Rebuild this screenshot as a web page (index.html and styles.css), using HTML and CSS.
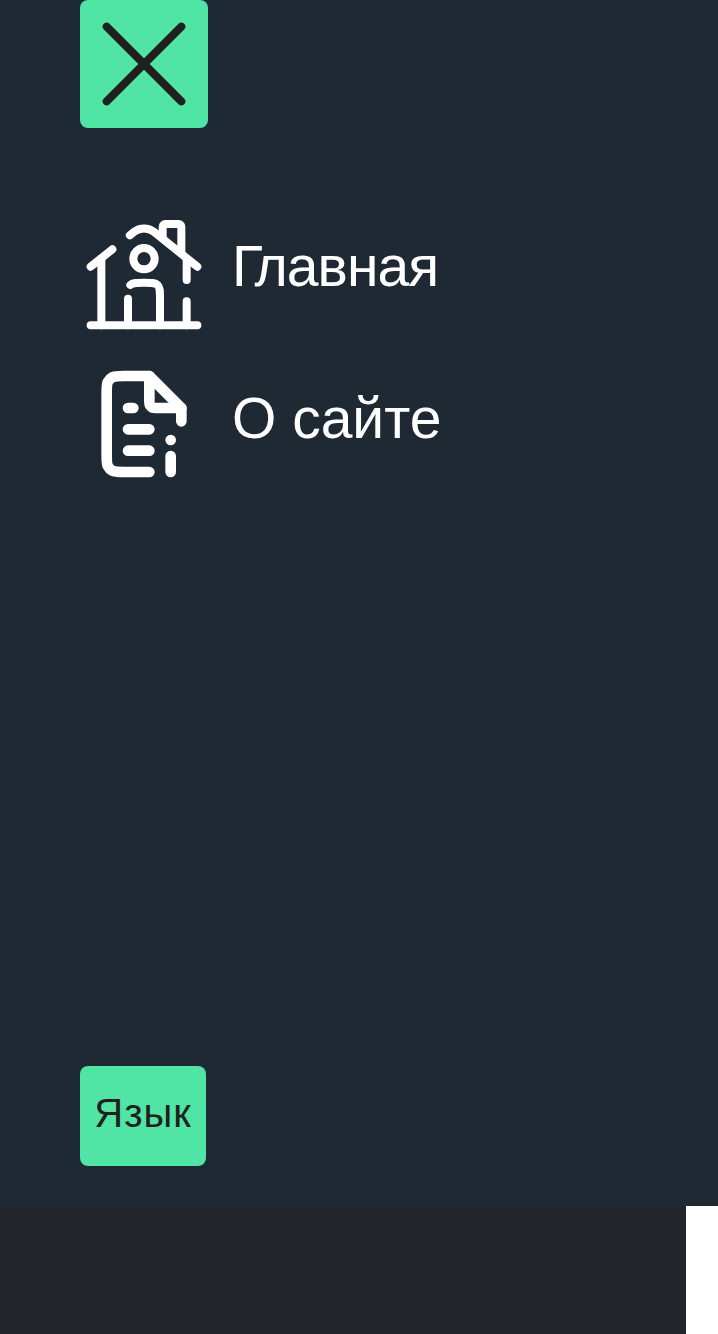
FILE: index.html
```html
<!DOCTYPE html>
<html lang="ru">
<head>
<meta charset="utf-8">
<title>Меню</title>
<link rel="stylesheet" href="styles.css">
</head>
<body>
<aside class="menu">
  <button class="close" aria-label="Закрыть">
    <svg class="icon" viewBox="0 0 24 24" stroke-width="1.5"><path d="M5 5L19 19M19 5L5 19"/></svg>
  </button>
  <nav class="links">
    <a class="link">
      <svg class="icon" viewBox="0 0 24 24" stroke-width="1.5">
        <path d="M22 22L2 22"/>
        <path d="M2 11L6.063 7.75M22 11L13.874 4.499C12.778 3.623 11.222 3.623 10.126 4.499L9.344 5.125"/>
        <path d="M15.5 5.5V3.5C15.5 3.224 15.724 3 16 3H18.5C18.776 3 19 3.224 19 3.5V8.5"/>
        <path d="M4 22V9.5M20 9.5V13.5M20 22V17.5"/>
        <path d="M15 22V17C15 15.586 15 14.879 14.561 14.439C14.121 14 13.414 14 12 14C10.586 14 9.879 14 9.439 14.439M9 22V17"/>
        <circle cx="12" cy="9.5" r="2"/>
      </svg>
      <span class="label label-home"><span class="initial">Г</span>лавная</span>
    </a>
    <a class="link">
      <svg class="icon" viewBox="0 0 24 24" stroke-width="2">
        <path d="M13 21H8.2C7.08 21 6.52 21 6.092 20.782C5.716 20.59 5.41 20.284 5.218 19.908C5 19.48 5 18.92 5 17.8V6.2C5 5.08 5 4.52 5.218 4.092C5.41 3.716 5.716 3.41 6.092 3.218C6.52 3 7.08 3 8.2 3H13L19 9V11.5"/>
        <path d="M13 3V7.4C13 7.96 13 8.24 13.109 8.454C13.205 8.642 13.358 8.795 13.546 8.891C13.76 9 14.04 9 14.6 9H19"/>
        <path d="M9 9H10M9 13H13M9 17H13M17 15H17.001M17 18V21"/>
      </svg>
      <span class="label">О сайте</span>
    </a>
  </nav>
  <button class="language"><span class="language-text">Язык</span></button>
</aside>
<footer class="footer"></footer>
</body>
</html>
```
FILE: styles.css
```css
* { box-sizing: border-box; }
body {
  margin: 0;
  height: 1334px;
  overflow: hidden;
  background: #fff;
  font-family: "Liberation Sans", Arial, sans-serif;
}
.menu {
  display: flex;
  flex-direction: column;
  align-items: flex-start;
  height: 1206px;
  padding: 0 80px 40px;
  background: #1e2934;
  color: #fff;
}
.close, .language {
  padding: 0;
  border: 0;
  border-radius: 8px;
  background: #50e5a5;
  color: #202020;
  font-family: inherit;
}
.close { width: 128px; height: 128px; }
.icon {
  display: block;
  flex: none;
  width: 128px;
  height: 128px;
  fill: none;
  stroke: currentColor;
  stroke-linecap: round;
  stroke-linejoin: round;
}
.links {
  display: flex;
  flex-direction: column;
  gap: 24px;
  margin-top: 80px;
}
.link {
  display: flex;
  align-items: center;
  gap: 24px;
  height: 128px;
}
.label {
  padding-bottom: 12px;
  font-size: 57px;
  line-height: 64px;
  white-space: nowrap;
}
.label-home { letter-spacing: -0.9px; }
.initial { letter-spacing: -8.5px; }
.language {
  width: 126px;
  height: 100px;
  margin-top: auto;
  font-size: 40px;
}
.language-text {
  display: block;
  padding-bottom: 6px;
  letter-spacing: 1px;
}
.footer {
  width: 686px;
  height: 128px;
  background: #22252c;
}
```
